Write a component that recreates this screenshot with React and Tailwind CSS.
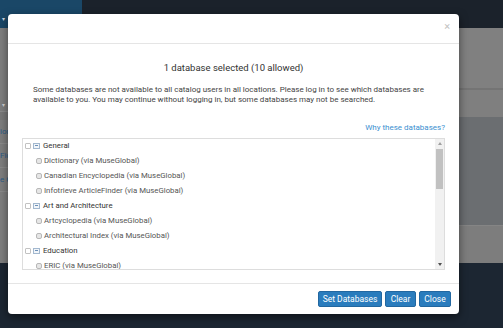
import { useState } from 'react'

const GROUPS = [
  {
    name: 'General',
    items: [
      'Dictionary (via MuseGlobal)',
      'Canadian Encyclopedia (via MuseGlobal)',
      'Infotrieve ArticleFinder (via MuseGlobal)',
    ],
  },
  {
    name: 'Art and Architecture',
    items: ['Artcyclopedia (via MuseGlobal)', 'Architectural Index (via MuseGlobal)'],
  },
  {
    name: 'Education',
    items: ['ERIC (via MuseGlobal)'],
  },
]

function GroupRow({ name }) {
  return (
    <div className="flex h-[15px] items-center pl-[2px] text-[7.8px] text-[#333]">
      <span className="h-[6px] w-[6px] rounded-[1px] border border-[#c2c2c2] bg-white" />
      <span className="ml-[2px] flex h-[6px] w-[7px] flex-col justify-center border border-[#a3b8cf] bg-[#f1f5f9] px-[1px]">
        <span className="h-[1px] bg-[#6c90b8]" />
      </span>
      <span className="ml-[3px]">{name}</span>
    </div>
  )
}

function ItemRow({ label }) {
  return (
    <div className="flex h-[15px] items-center pl-[13px] text-[7.8px] text-[#555]">
      <span className="h-[6px] w-[6px] rounded-[2px] border border-[#b8b8b8] bg-[#e6e6e6]" />
      <span className="ml-[2px]">{label}</span>
    </div>
  )
}

function DatabaseList() {
  return (
    <div className="flex h-[132px] border border-[#dddddd]">
      <div className="-mt-[1px] flex-1 overflow-hidden">
        {GROUPS.map((g) => (
          <div key={g.name}>
            <GroupRow name={g.name} />
            {g.items.map((it) => (
              <ItemRow key={it} label={it} />
            ))}
          </div>
        ))}
      </div>
      <div className="flex w-[9px] flex-col items-center bg-[#f1f1f1]">
        <span className="mt-[3px] h-0 w-0 border-x-[2px] border-b-[3px] border-x-transparent border-b-[#a0a0a0]" />
        <span className="mt-[4px] h-[40px] w-[7px] bg-[#c1c1c1]" />
        <span className="flex-1" />
        <span className="mb-[3px] h-0 w-0 border-x-[2px] border-t-[3px] border-x-transparent border-t-[#505050]" />
      </div>
    </div>
  )
}

export default function App() {
  const [open] = useState(true)

  return (
    <div className="relative h-[328px] w-[503px] overflow-hidden font-['Roboto',sans-serif]">
      {/* page behind the dialog */}
      <div className="flex h-full flex-col">
        <div className="flex h-[28px]">
          <div className="w-[82px] bg-[#1a4767] pl-[2px] pt-[14px] text-[6px] text-[#c9d4de]">▾</div>
          <div className="flex-1 bg-[#1b222b]" />
        </div>

        <div className="flex h-[235px] bg-[#7e7e7e]">
          <div className="flex w-[60px] flex-col text-[8px] text-[#2c5c86]">
            <div className="h-[84px] border-b border-[#8a8a8a] pl-[2px] pt-[72px] text-[6px] text-[#d0d0d0]">▾</div>
            <div className="h-[8px] bg-[#777]" />
            <div className="flex h-[24px] items-center border-b border-[#8a8a8a]">ion</div>
            <div className="flex h-[24px] items-center border-b border-[#8a8a8a]">Fic</div>
            <div className="flex h-[24px] items-center border-b border-[#8a8a8a]">e G</div>
          </div>
          <div className="flex-1" />
          <div className="flex w-[44px] flex-col">
            <div className="h-[62px] border-b-2 border-[#747474] bg-[#808080]" />
            <div className="h-[27px] bg-[#7f7f7f]" />
            <div className="h-[109px] border-b border-[#858585] bg-[#6b6e71]" />
            <div className="flex-1 bg-[#7d7d7d]" />
          </div>
        </div>

        <footer className="flex flex-1 bg-[#1c2632] pl-[31px] pt-[12px] text-[8.5px] leading-[10px] text-[#6f7883]">
          <div className="w-[85px]">Portal</div>
          <div className="w-[84px]">Keyword</div>
          <div className="w-[85px]">
            Community
            <br />
            Keyword
          </div>
          <div>My Record</div>
        </footer>
      </div>

      {/* dialog */}
      {open && (
        <div className="absolute left-[8px] top-[14px] flex h-[300px] w-[451px] flex-col rounded-[4px] bg-white shadow-[0_3px_9px_rgba(0,0,0,0.5)]">
          <div className="flex h-[30px] items-start justify-end border-b border-[#e5e5e5] pr-[9px] pt-[7px]">
            <span className="text-[11px] leading-[12px] text-[#c2c2c2]">×</span>
          </div>

          <div className="flex flex-1 flex-col px-[14px] pt-[18px]">
            <div className="text-center text-[9.5px] leading-[12px] text-[#333]">
              1 database selected (10 allowed)
            </div>
            <p className="mt-[11px] px-[11px] text-[8px] leading-[10px] text-[#444]">
              Some databases are not available to all catalog users in all locations. Please log in to see which databases are available to you. You may continue without logging in, but some databases may not be searched.
            </p>
            <div className="mt-[18px] text-right text-[8px] leading-[10px] text-[#3b8fd0]">
              Why these databases?
            </div>
            <div className="mt-[5px]">
              <DatabaseList />
            </div>
          </div>

          <div className="flex justify-end gap-[3px] border-t border-[#e5e5e5] px-[8px] pb-[7px] pt-[7px]">
            <button className="h-[16px] w-[64px] rounded-[2px] border border-[#2267a0] bg-[#2a7cbd] text-[8.5px] text-white">
              Set Databases
            </button>
            <button className="h-[16px] w-[31px] rounded-[2px] border border-[#2267a0] bg-[#2a7cbd] text-[8.5px] text-white">
              Clear
            </button>
            <button className="h-[16px] w-[32px] rounded-[2px] border border-[#2267a0] bg-[#2a7cbd] text-[8.5px] text-white">
              Close
            </button>
          </div>
        </div>
      )}
    </div>
  )
}
